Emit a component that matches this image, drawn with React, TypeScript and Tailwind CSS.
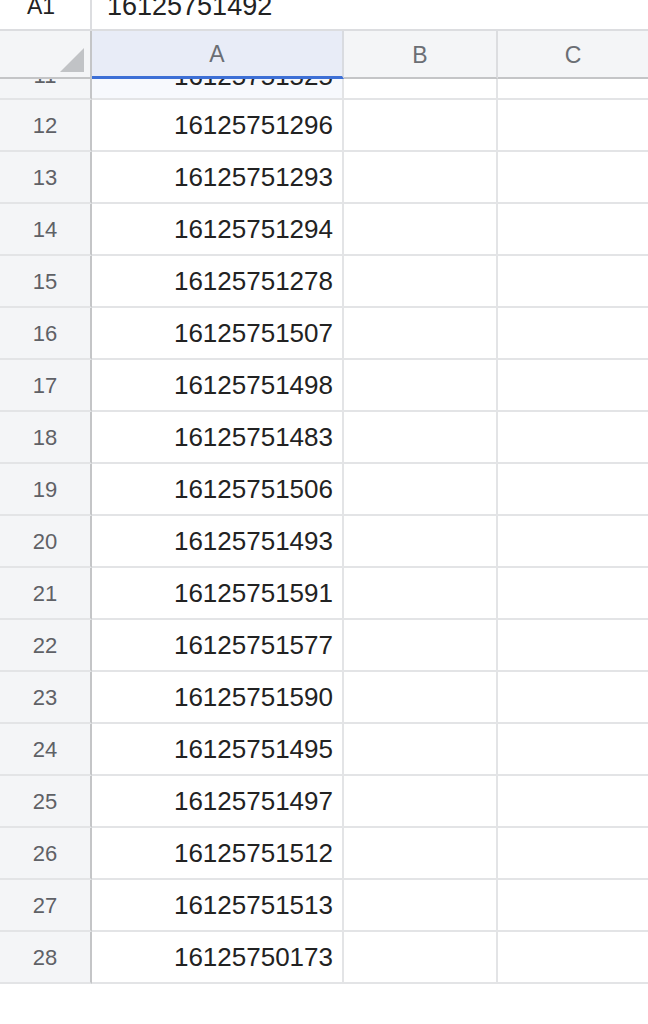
import React from 'react'

const rows: [number, string][] = [
  [12, '16125751296'],
  [13, '16125751293'],
  [14, '16125751294'],
  [15, '16125751278'],
  [16, '16125751507'],
  [17, '16125751498'],
  [18, '16125751483'],
  [19, '16125751506'],
  [20, '16125751493'],
  [21, '16125751591'],
  [22, '16125751577'],
  [23, '16125751590'],
  [24, '16125751495'],
  [25, '16125751497'],
  [26, '16125751512'],
  [27, '16125751513'],
  [28, '16125750173'],
]

function Row({ num, value, partial }: { num: number; value: string; partial?: boolean }) {
  return (
    <div className="flex h-[52px] shrink-0">
      <div
        className={`w-[92px] shrink-0 flex items-center justify-center bg-[#f4f5f7] border-r-2 border-r-[#c4c5c7] border-b-2 border-b-[#e3e4e6] text-[22px] text-[#5f6166] ${
          partial ? 'pt-[4px]' : ''
        }`}
      >
        {num}
      </div>
      <div
        className={`w-[252px] shrink-0 flex items-center justify-end pr-[9px] border-r-2 border-r-[#e3e4e6] border-b-2 border-b-[#e3e4e6] text-[26px] text-[#222] ${
          partial ? 'bg-[#f7f9fd] pt-[6px]' : 'bg-white'
        }`}
      >
        {value}
      </div>
      <div className="w-[154px] shrink-0 border-r-2 border-r-[#e3e4e6] border-b-2 border-b-[#e3e4e6]" />
      <div className="flex-1 border-b-2 border-b-[#e3e4e6]" />
    </div>
  )
}

export default function App() {
  return (
    <div
      className="w-[648px] h-[1024px] bg-white overflow-hidden flex flex-col"
      style={{ fontFamily: '"Liberation Sans", Arial, sans-serif' }}
    >
      {/* Formula bar */}
      <div className="h-[31px] shrink-0 flex border-b-2 border-[#dcdde0] overflow-hidden">
        <div className="w-[92px] shrink-0 border-r-2 border-[#dcdde0] flex items-start justify-center">
          <span className="text-[23px] leading-none text-[#222] -mt-[5px] pr-[8px]">A1</span>
        </div>
        <div className="flex-1 flex items-start pl-[15px]">
          <span className="text-[27px] leading-none text-[#222] -mt-[7px]">16125751492</span>
        </div>
      </div>

      {/* Column headers */}
      <div className="h-[48px] shrink-0 flex">
        <div className="w-[92px] shrink-0 bg-[#f4f5f7] border-r-2 border-r-[#c4c5c7] border-b-2 border-b-[#c4c5c7] relative">
          <svg className="absolute left-[60px] top-[17px]" width="24" height="24" viewBox="0 0 24 24">
            <polygon points="24,0 24,24 0,24" fill="#c1c3c6" />
          </svg>
        </div>
        <div className="w-[252px] shrink-0 bg-[#e8ecf7] border-r-2 border-r-[#d9dbe0] border-b-[3px] border-b-[#3d6fd6] flex items-center justify-center pt-[2px] text-[23px] text-[#6b6e74]">
          A
        </div>
        <div className="w-[154px] shrink-0 bg-[#f4f5f7] border-r-2 border-r-[#dcdde0] border-b-2 border-b-[#c4c5c7] flex items-center justify-center pt-[2px] text-[23px] text-[#6b6e74]">
          B
        </div>
        <div className="flex-1 bg-[#f4f5f7] border-b-2 border-b-[#c4c5c7] flex items-center justify-center pt-[2px] text-[23px] text-[#6b6e74]">
          C
        </div>
      </div>

      {/* Partially scrolled row 11 */}
      <div className="h-[21px] shrink-0 overflow-hidden flex flex-col justify-end">
        <Row num={11} value="16125751525" partial />
      </div>

      {rows.map(([n, v]) => (
        <Row key={n} num={n} value={v} />
      ))}
    </div>
  )
}
